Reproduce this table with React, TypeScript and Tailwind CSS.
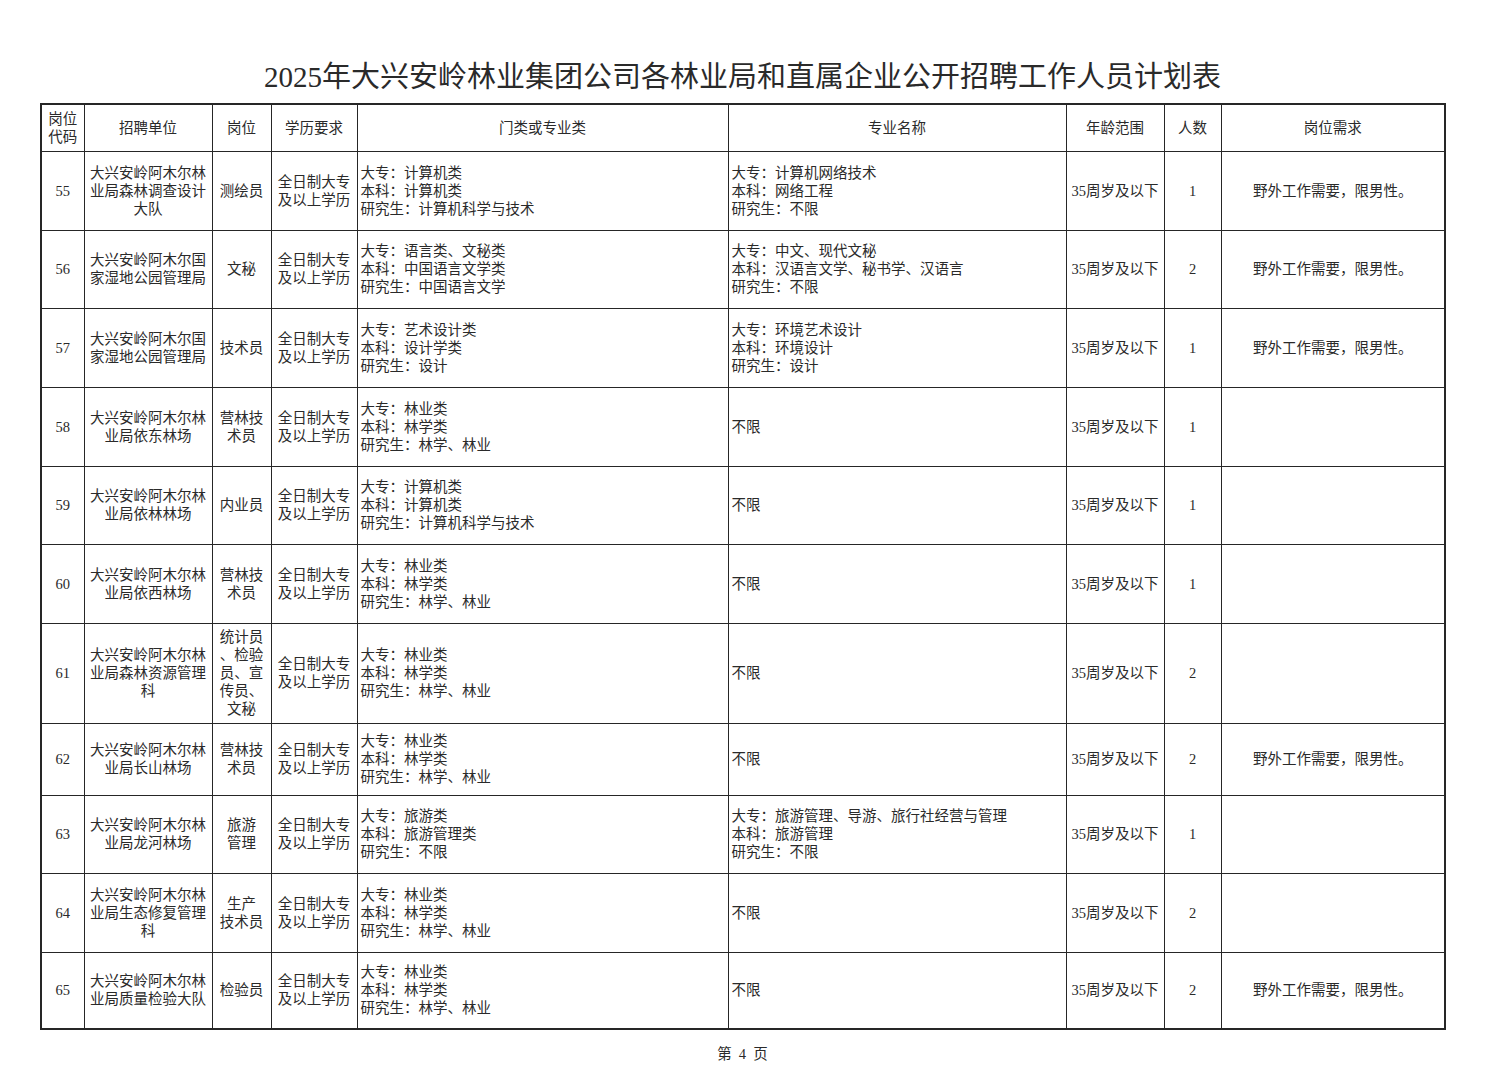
const FONT = { fontFamily: '"Liberation Serif", "Noto Sans CJK SC", serif' };

type Row = {
  code: string;
  unit: string[];
  post: string[];
  edu: string[];
  cat: string[];
  major: string[];
  age: string;
  num: string;
  need: string;
  h: string;
};

const EDU = ["全日制大专", "及以上学历"];
const FOREST = ["大专：林业类", "本科：林学类", "研究生：林学、林业"];
const MALE = "野外工作需要，限男性。";

const rows: Row[] = [
  {
    code: "55",
    unit: ["大兴安岭阿木尔林", "业局森林调查设计", "大队"],
    post: ["测绘员"],
    edu: EDU,
    cat: ["大专：计算机类", "本科：计算机类", "研究生：计算机科学与技术"],
    major: ["大专：计算机网络技术", "本科：网络工程", "研究生：不限"],
    age: "35周岁及以下",
    num: "1",
    need: MALE,
    h: "h-[79px]",
  },
  {
    code: "56",
    unit: ["大兴安岭阿木尔国", "家湿地公园管理局"],
    post: ["文秘"],
    edu: EDU,
    cat: ["大专：语言类、文秘类", "本科：中国语言文学类", "研究生：中国语言文学"],
    major: ["大专：中文、现代文秘", "本科：汉语言文学、秘书学、汉语言", "研究生：不限"],
    age: "35周岁及以下",
    num: "2",
    need: MALE,
    h: "h-[78px]",
  },
  {
    code: "57",
    unit: ["大兴安岭阿木尔国", "家湿地公园管理局"],
    post: ["技术员"],
    edu: EDU,
    cat: ["大专：艺术设计类", "本科：设计学类", "研究生：设计"],
    major: ["大专：环境艺术设计", "本科：环境设计", "研究生：设计"],
    age: "35周岁及以下",
    num: "1",
    need: MALE,
    h: "h-[79px]",
  },
  {
    code: "58",
    unit: ["大兴安岭阿木尔林", "业局依东林场"],
    post: ["营林技", "术员"],
    edu: EDU,
    cat: FOREST,
    major: ["不限"],
    age: "35周岁及以下",
    num: "1",
    need: "",
    h: "h-[79px]",
  },
  {
    code: "59",
    unit: ["大兴安岭阿木尔林", "业局依林林场"],
    post: ["内业员"],
    edu: EDU,
    cat: ["大专：计算机类", "本科：计算机类", "研究生：计算机科学与技术"],
    major: ["不限"],
    age: "35周岁及以下",
    num: "1",
    need: "",
    h: "h-[78px]",
  },
  {
    code: "60",
    unit: ["大兴安岭阿木尔林", "业局依西林场"],
    post: ["营林技", "术员"],
    edu: EDU,
    cat: FOREST,
    major: ["不限"],
    age: "35周岁及以下",
    num: "1",
    need: "",
    h: "h-[79px]",
  },
  {
    code: "61",
    unit: ["大兴安岭阿木尔林", "业局森林资源管理", "科"],
    post: ["统计员", "、检验", "员、宣", "传员、", "文秘"],
    edu: EDU,
    cat: FOREST,
    major: ["不限"],
    age: "35周岁及以下",
    num: "2",
    need: "",
    h: "h-[100px]",
  },
  {
    code: "62",
    unit: ["大兴安岭阿木尔林", "业局长山林场"],
    post: ["营林技", "术员"],
    edu: EDU,
    cat: FOREST,
    major: ["不限"],
    age: "35周岁及以下",
    num: "2",
    need: MALE,
    h: "h-[72px]",
  },
  {
    code: "63",
    unit: ["大兴安岭阿木尔林", "业局龙河林场"],
    post: ["旅游", "管理"],
    edu: EDU,
    cat: ["大专：旅游类", "本科：旅游管理类", "研究生：不限"],
    major: ["大专：旅游管理、导游、旅行社经营与管理", "本科：旅游管理", "研究生：不限"],
    age: "35周岁及以下",
    num: "1",
    need: "",
    h: "h-[78px]",
  },
  {
    code: "64",
    unit: ["大兴安岭阿木尔林", "业局生态修复管理", "科"],
    post: ["生产", "技术员"],
    edu: EDU,
    cat: FOREST,
    major: ["不限"],
    age: "35周岁及以下",
    num: "2",
    need: "",
    h: "h-[79px]",
  },
  {
    code: "65",
    unit: ["大兴安岭阿木尔林", "业局质量检验大队"],
    post: ["检验员"],
    edu: EDU,
    cat: FOREST,
    major: ["不限"],
    age: "35周岁及以下",
    num: "2",
    need: MALE,
    h: "h-[77px]",
  },
];

const cell = "border-[1.5px] border-[#262626] align-middle p-0";

function Lines({ lines }: { lines: string[] }) {
  return (
    <>
      {lines.map((l, i) => (
        <div key={i} className="whitespace-nowrap">
          {l}
        </div>
      ))}
    </>
  );
}

export default function App() {
  return (
    <div className="w-[1485px] h-[1080px] bg-white text-[#2a2a2a]" style={FONT}>
      <div className="pt-[58px]">
        <h1 className="h-[38px] text-center text-[29px] leading-[38px] font-normal">
          2025年大兴安岭林业集团公司各林业局和直属企业公开招聘工作人员计划表
        </h1>
        <table className="mt-[7px] ml-[40px] w-[1404px] table-fixed border-collapse border-2 border-[#262626] text-[14.5px] leading-[18px]">
          <colgroup>
            <col className="w-[43px]" />
            <col className="w-[128px]" />
            <col className="w-[59px]" />
            <col className="w-[86px]" />
            <col className="w-[371px]" />
            <col className="w-[338px]" />
            <col className="w-[98px]" />
            <col className="w-[57px]" />
            <col className="w-[224px]" />
          </colgroup>
          <thead>
            <tr className="h-[47px] text-center">
              <th className={`${cell} font-normal`}>
                <Lines lines={["岗位", "代码"]} />
              </th>
              <th className={`${cell} font-normal`}>招聘单位</th>
              <th className={`${cell} font-normal`}>岗位</th>
              <th className={`${cell} font-normal`}>学历要求</th>
              <th className={`${cell} font-normal`}>门类或专业类</th>
              <th className={`${cell} font-normal`}>专业名称</th>
              <th className={`${cell} font-normal`}>年龄范围</th>
              <th className={`${cell} font-normal`}>人数</th>
              <th className={`${cell} font-normal`}>岗位需求</th>
            </tr>
          </thead>
          <tbody>
            {rows.map((r) => (
              <tr key={r.code} className={r.h}>
                <td className={`${cell} text-center`}>{r.code}</td>
                <td className={`${cell} text-center`}>
                  <Lines lines={r.unit} />
                </td>
                <td className={`${cell} text-center`}>
                  <Lines lines={r.post} />
                </td>
                <td className={`${cell} text-center`}>
                  <Lines lines={r.edu} />
                </td>
                <td className={`${cell} pl-[3px] text-left`}>
                  <Lines lines={r.cat} />
                </td>
                <td className={`${cell} pl-[3px] text-left`}>
                  <Lines lines={r.major} />
                </td>
                <td className={`${cell} text-center`}>{r.age}</td>
                <td className={`${cell} text-center`}>{r.num}</td>
                <td className={`${cell} text-center`}>{r.need}</td>
              </tr>
            ))}
          </tbody>
        </table>
        <div className="mt-[14px] whitespace-pre text-center text-[14.5px] leading-[20px]">
          第  4  页
        </div>
      </div>
    </div>
  );
}
